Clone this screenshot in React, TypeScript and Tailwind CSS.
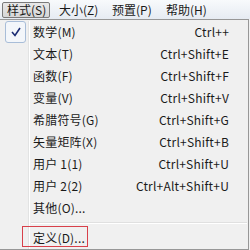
import React from 'react';

const items = [
  { label: '数学(M)', key: 'Ctrl++', checked: true },
  { label: '文本(T)', key: 'Ctrl+Shift+E' },
  { label: '函数(F)', key: 'Ctrl+Shift+F' },
  { label: '变量(V)', key: 'Ctrl+Shift+V' },
  { label: '希腊符号(G)', key: 'Ctrl+Shift+G' },
  { label: '矢量矩阵(X)', key: 'Ctrl+Shift+B' },
  { label: '用户 1(1)', key: 'Ctrl+Shift+U' },
  { label: '用户 2(2)', key: 'Ctrl+Alt+Shift+U' },
  { label: '其他(O)...', key: '' },
];

function Gutter({ children }: { children?: React.ReactNode }) {
  return (
    <div className="w-[29px] shrink-0 self-stretch flex items-center justify-center border-r border-[#e2e3e3]">
      {children}
    </div>
  );
}

function Row({ label, shortcut, checked }: { label: string; shortcut: string; checked?: boolean }) {
  return (
    <div className="flex h-[22px] items-stretch">
      <Gutter>
        {checked && (
          <div className="ml-[3px] w-[21px] h-[22px] rounded-[3px] border border-[#a8bdd8] bg-[#f3f6fa] flex items-center justify-center">
            <svg width="10" height="10" viewBox="0 0 10 10">
              <path d="M1 5 L4 8.5 L9 1" fill="none" stroke="#1a2b73" strokeWidth="1.6" />
            </svg>
          </div>
        )}
      </Gutter>
      <div className="flex-1 flex items-center justify-between border-l border-white pl-[3px] pr-[19px] tracking-[0.2px]">
        <span>{label}</span>
        <span>{shortcut}</span>
      </div>
    </div>
  );
}

export default function App() {
  return (
    <div className="w-[250px] h-[250px] overflow-hidden bg-[#f0f0f0] text-[12px] leading-none text-[#1a1a1a] font-['Noto_Sans_CJK_SC','Noto_Sans',sans-serif]">
      <div className="h-[19px] flex items-center bg-gradient-to-b from-[#f8fafc] to-[#e6ebf2] pl-[2px]">
        <div className="w-[48px] h-[16px] pl-[4px] flex items-center border border-[#7a7a7a] bg-gradient-to-b from-[#e8e8e8] to-[#d6d6d6] rounded-[2px]">
          样式(S)
        </div>
        <div className="ml-[9px] w-[53px]">大小(Z)</div>
        <div className="w-[54px]">预置(P)</div>
        <div>帮助(H)</div>
      </div>
      <div className="w-[249px] border-r border-t border-b border-[#979797] border-l-[#d8d8d8] bg-[#f0f0f0] pt-[1px]">
        {items.map((it) => (
          <Row key={it.label} label={it.label} shortcut={it.key} checked={it.checked} />
        ))}
        <div className="flex h-[8px]">
          <Gutter />
          <div className="flex-1 border-l border-white flex items-center pl-[1px] pr-[1px]">
            <div className="w-full h-[2px] border-t border-[#e0e0e0] bg-white" />
          </div>
        </div>
        <div className="relative">
          <Row label="定义(D)..." shortcut="" />
          <div className="absolute left-[22px] top-[-1px] w-[66px] h-[21px] border border-[#d8404a]" />
        </div>
      </div>
    </div>
  );
}
